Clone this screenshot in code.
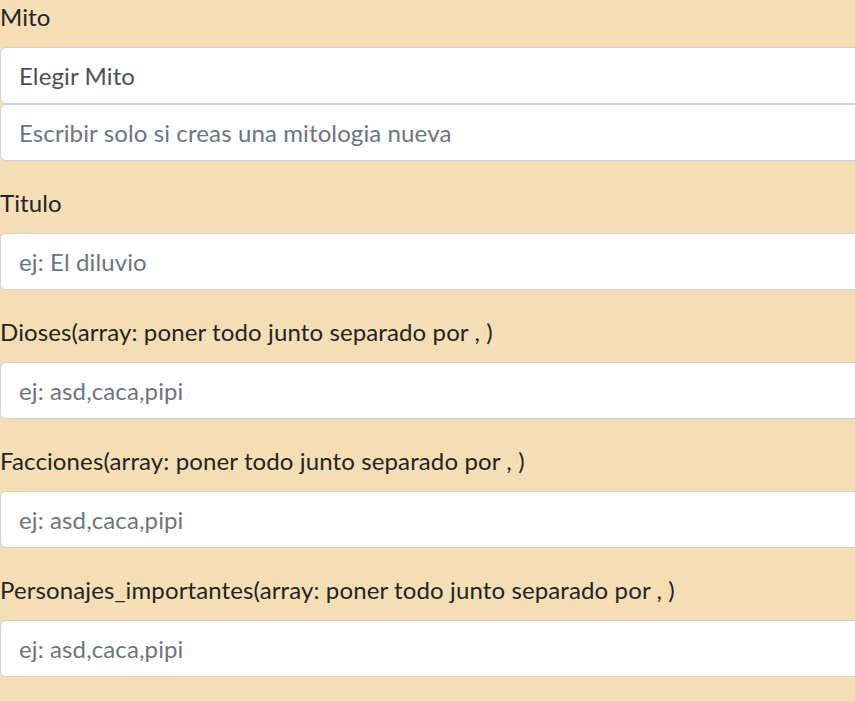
export default function App() {
  const fields = [
    { label: "Titulo", placeholder: "ej: El diluvio" },
    { label: "Dioses(array: poner todo junto separado por , )", placeholder: "ej: asd,caca,pipi" },
    { label: "Facciones(array: poner todo junto separado por , )", placeholder: "ej: asd,caca,pipi" },
    { label: "Personajes_importantes(array: poner todo junto separado por , )", placeholder: "ej: asd,caca,pipi" },
  ];

  const inputCls =
    "block w-full h-[57px] px-[18px] py-[9px] bg-white border border-[#ced4da] rounded-[6px] text-[24px] leading-[36px] tracking-[0.12px] text-[#495057] placeholder:text-[#6c757d] outline-none";

  return (
    <div
      className="w-[855px] h-[701px] overflow-hidden bg-[#f5deb3] text-[#212529] text-[24px] leading-[36px] tracking-[0.12px]"
      style={{ fontFamily: '"Segoe UI", Lato, sans-serif' }}
    >
      <form className="w-[1000px] -mt-px">
        {/* mito: select + free text */}
        <div className="mb-[24px]">
          <label className="block mb-[12px]">Mito</label>
          <select className={inputCls + " appearance-none text-[#212529]"}>
            <option>Elegir Mito</option>
          </select>
          <input className={inputCls} placeholder="Escribir solo si creas una mitologia nueva" />
        </div>

        {fields.map((f) => (
          <div key={f.label} className="mb-[24px]">
            <label className="block mb-[12px]">{f.label}</label>
            <input className={inputCls} placeholder={f.placeholder} />
          </div>
        ))}
      </form>
    </div>
  );
}
